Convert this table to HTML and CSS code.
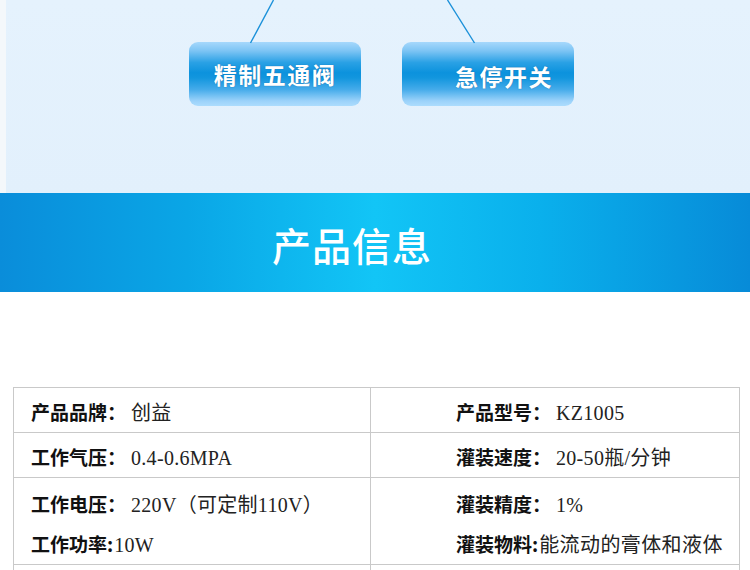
FILE: index.html
```html
<!DOCTYPE html>
<html lang="zh">
<head>
<meta charset="utf-8">
<link rel="stylesheet" href="styles.css">
</head>
<body>
<div class="top">
  <div class="strip"></div>
  <div class="panel">
    <div class="btn">精制五通阀</div>
    <div class="btn btn-shift">急停开关</div>
  </div>
  <svg class="wires" width="750" height="193" viewBox="0 0 750 193">
    <line x1="273.5" y1="0" x2="250.5" y2="43" stroke="#1a90d9" stroke-width="1.4"/>
    <line x1="447.5" y1="0" x2="474.5" y2="43" stroke="#1a90d9" stroke-width="1.4"/>
  </svg>
</div>
<div class="banner"><span class="banner-title">产品信息</span></div>
<div class="gap"></div>
<table class="spec">
  <tr>
    <td class="c-left"><div class="line"><b class="lab">产品品牌：</b><span class="val">创益</span></div></td>
    <td class="c-right"><div class="line"><b class="lab">产品型号：</b><span class="val">KZ1005</span></div></td>
  </tr>
  <tr>
    <td class="c-left"><div class="line"><b class="lab">工作气压：</b><span class="val">0.4-0.6MPA</span></div></td>
    <td class="c-right"><div class="line"><b class="lab">灌装速度：</b><span class="val">20-50瓶/分钟</span></div></td>
  </tr>
  <tr>
    <td class="c-left multi">
      <div class="line"><b class="lab">工作电压：</b><span class="val">220V（可定制110V）</span></div>
      <div class="line"><b class="lab">工作功率:</b><span class="val tight">10W</span></div>
    </td>
    <td class="c-right multi">
      <div class="line"><b class="lab">灌装精度：</b><span class="val">1%</span></div>
      <div class="line"><b class="lab">灌装物料:</b><span class="val tight cjk">能流动的膏体和液体</span></div>
    </td>
  </tr>
  <tr>
    <td class="c-left last"></td>
    <td class="c-right last"></td>
  </tr>
</table>
</body>
</html>
```
FILE: styles.css
```css
html, body {
  margin: 0;
  padding: 0;
  background: #ffffff;
  font-family: "Noto Sans CJK SC", "Noto Sans", sans-serif;
  width: 750px;
  overflow: hidden;
}

.top {
  position: relative;
  display: flex;
  height: 193px;
}

.strip {
  width: 6px;
  background: #f4f8fb;
}

.panel {
  flex: 1;
  background: linear-gradient(#e5f2fd, #e2f0fc);
  display: flex;
  align-items: flex-start;
  gap: 41px;
  padding: 42px 0 0 183px;
  box-sizing: border-box;
}

.btn {
  width: 172px;
  height: 64px;
  border-radius: 9px;
  background: linear-gradient(#a6d8fc 0%, #7cc4f4 14%, #2aa1e5 32%, #0c92dd 48%, #1296de 56%, #44abea 74%, #9bd2fa 92%, #acdcfd 100%);
  color: #ffffff;
  font-weight: bold;
  font-size: 23px;
  letter-spacing: 1.5px;
  line-height: 64px;
  text-align: center;
  text-shadow: 0 0 1px rgba(0, 50, 110, 0.6);
  box-sizing: border-box;
}

.btn-shift {
  padding-left: 32px;
  padding-top: 4px;
  line-height: 60px;
}

.wires {
  position: absolute;
  left: 0;
  top: 0;
  pointer-events: none;
}

.banner {
  height: 99px;
  background: linear-gradient(90deg, #0a8dda 0%, #0aa6e6 25%, #12c5f6 50%, #0ab0ec 72%, #078bd8 100%);
  display: flex;
  align-items: center;
  padding-left: 272px;
  box-sizing: border-box;
}

.banner-title {
  color: #ffffff;
  font-size: 39px;
  letter-spacing: 1px;
  font-weight: 500;
  padding-top: 2px;
}

.gap {
  height: 95px;
}

.spec {
  margin-left: 13px;
  width: 727px;
  border-collapse: collapse;
  table-layout: fixed;
}

.spec td {
  border: 1px solid #c9c9c9;
  padding: 4px 0 0 0;
  height: 40px;
  vertical-align: top;
  color: #111111;
  white-space: nowrap;
  box-sizing: content-box;
}

.c-left {
  width: 339px;
  padding-left: 17px !important;
}

.c-right {
  padding-left: 85px !important;
}

.line {
  display: flex;
  align-items: baseline;
  height: 40px;
  line-height: 40px;
  overflow: visible;
}

.spec td.multi {
  padding-top: 6px;
  height: 80px;
}

.spec td.last {
  height: 10px;
  padding: 0;
  border-bottom: none;
}

.lab {
  font-size: 19px;
  font-weight: bold;
  color: #111111;
}

.val {
  font-family: "Liberation Serif", "Noto Sans CJK SC", serif;
  font-size: 20px;
  letter-spacing: 0.3px;
  color: #222222;
  margin-left: 5px;
}

.val.tight {
  margin-left: 1px;
}

.val.cjk {
  font-family: "Noto Sans CJK SC", sans-serif;
  font-size: 20px;
  letter-spacing: 0.4px;
  color: #222222;
}
```
